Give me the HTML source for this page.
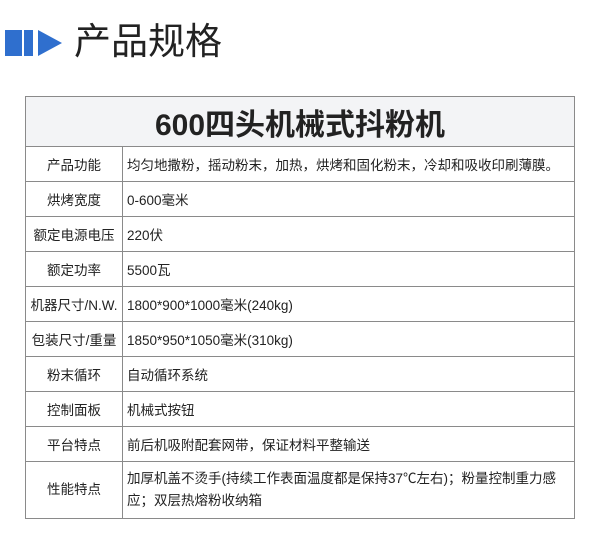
<!DOCTYPE html>
<html><head><meta charset="utf-8"><style>
body{margin:0;width:600px;height:543px;background:#fff;font-family:"Liberation Sans","Noto Sans CJK SC",sans-serif;position:relative;overflow:hidden}
.icon{position:absolute}
h1{position:absolute;left:74px;top:18px;margin:0;font-weight:400;font-size:37px;color:#222;line-height:48px}
table{position:absolute;left:25px;top:96px;width:550px;border-collapse:collapse;color:#222;font-size:13.5px}
td{border:1px solid #8a8a8a;padding:0 0 0 4px;height:34px}
td.k{width:96px;text-align:center;padding:0}
tr.h td{height:49px;background:#f3f4f6;text-align:center;font-weight:bold;font-size:30px;padding:0}
tr.t td{height:56px;line-height:22px}
</style></head><body>
<svg class="icon" width="70" height="60" style="left:0;top:20px"><rect x="5" y="10" width="17" height="26" fill="#2f6fce"/><rect x="24" y="10" width="9" height="26" fill="#2f6fce"/><polygon points="38,10 62,23 38,36" fill="#2f6fce"/></svg>
<h1>产品规格</h1>
<table>
<tr class="h"><td colspan="2">600四头机械式抖粉机</td></tr>
<tr><td class="k">产品功能</td><td>均匀地撒粉，摇动粉末，加热，烘烤和固化粉末，冷却和吸收印刷薄膜。</td></tr>
<tr><td class="k">烘烤宽度</td><td>0-600毫米</td></tr>
<tr><td class="k">额定电源电压</td><td>220伏</td></tr>
<tr><td class="k">额定功率</td><td>5500瓦</td></tr>
<tr><td class="k">机器尺寸/N.W.</td><td>1800*900*1000毫米(240kg)</td></tr>
<tr><td class="k">包装尺寸/重量</td><td>1850*950*1050毫米(310kg)</td></tr>
<tr><td class="k">粉末循环</td><td>自动循环系统</td></tr>
<tr><td class="k">控制面板</td><td>机械式按钮</td></tr>
<tr><td class="k">平台特点</td><td>前后机吸附配套网带，保证材料平整输送</td></tr>
<tr class="t"><td class="k">性能特点</td><td>加厚机盖不烫手(持续工作表面温度都是保持37℃左右)；粉量控制重力感应；双层热熔粉收纳箱</td></tr>
</table>
</body></html>
